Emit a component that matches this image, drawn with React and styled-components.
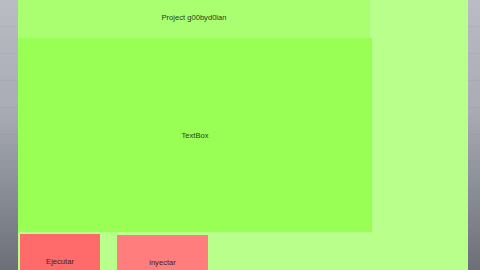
import React from "react";
import styled, { createGlobalStyle } from "styled-components";

const Global = createGlobalStyle`
  html, body { margin: 0; padding: 0; width: 480px; height: 270px; overflow: hidden; }
  body {
    font-family: "Liberation Sans", Arial, sans-serif;
    background:
      repeating-linear-gradient(180deg, transparent 0 26px, rgba(120,124,134,0.12) 26px 27px),
      linear-gradient(180deg, #b9bcc3 0%, #a9acb4 40%, #8a8e97 70%, #6c6f78 100%);
  }
`;

const Stage = styled.div`
  width: 480px;
  height: 270px;
  display: flex;
  padding-left: 18px;
  box-sizing: border-box;
`;

const Panel = styled.main`
  width: 450px;
  height: 270px;
  background: #b9ff8b;
  display: flex;
  flex-direction: column;
  overflow: hidden;
`;

const TitleBar = styled.header`
  width: 352px;
  height: 38px;
  flex: none;
  box-sizing: border-box;
  padding-bottom: 4px;
  background: #aaff70;
  display: flex;
  align-items: center;
  justify-content: center;
  font-size: 7.6px;
  color: #2b3a24;
`;

const TextBox = styled.div`
  width: 354px;
  height: 194px;
  flex: none;
  background: #99ff55;
  display: flex;
  align-items: center;
  justify-content: center;
  font-size: 7.6px;
  color: #2b3a24;
`;

const ButtonRow = styled.div`
  display: flex;
  align-items: flex-start;
  padding-top: 2px;
  padding-left: 2px;
  gap: 17px;
`;

const ActionButton = styled.button`
  width: ${(p) => p.$w}px;
  height: 54px;
  margin-top: ${(p) => p.$top || 0}px;
  border: none;
  padding: 0;
  background: ${(p) => p.$bg};
  color: #4a1c1c;
  font-family: "Liberation Sans", Arial, sans-serif;
  font-size: 7.6px;
  display: flex;
  align-items: center;
  justify-content: center;
  cursor: pointer;
`;

export default function App() {
  return (
    <>
      <Global />
      <Stage>
        <Panel>
          <TitleBar>Project g00byd0lan</TitleBar>
          <TextBox>TextBox</TextBox>
          <ButtonRow>
            <ActionButton $w={80} $bg="#ff6b6b">Ejecutar</ActionButton>
            <ActionButton $w={91} $top={1} $bg="#ff7d7d">inyectar</ActionButton>
          </ButtonRow>
        </Panel>
      </Stage>
    </>
  );
}
